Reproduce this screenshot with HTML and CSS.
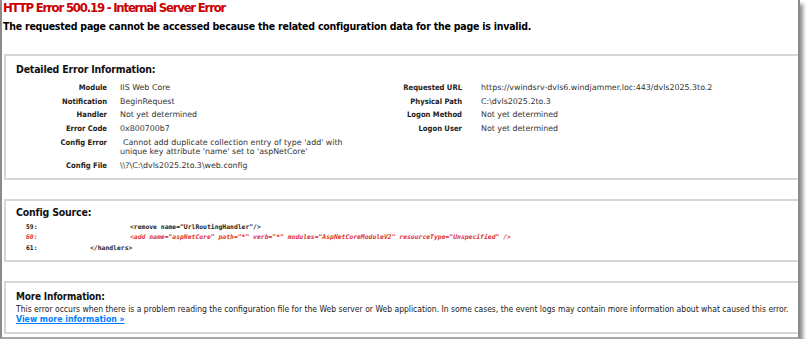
FILE: index.html
```html
<!DOCTYPE html>
<html lang="en">
<head>
  <meta charset="UTF-8" />
  <title>IIS 10.0 Detailed Error - 500.19 - Internal Server Error</title>
  <link rel="stylesheet" href="styles.css">
</head>
<body>
  <div class="window">
    <div class="header">
      <h2>HTTP Error 500.19 - Internal Server Error</h2>
      <h3>The requested page cannot be accessed because the related configuration data for the page is invalid.</h3>
    </div>

    <div class="panel details">
      <h4>Detailed Error Information:</h4>
      <div class="columns">
        <div class="grid grid-left">
          <div class="label">Module</div><div class="value">IIS Web Core</div>
          <div class="label">Notification</div><div class="value">BeginRequest</div>
          <div class="label">Handler</div><div class="value">Not yet determined</div>
          <div class="label">Error Code</div><div class="value">0x800700b7</div>
          <div class="label">Config Error</div><div class="value indent">Cannot add duplicate collection entry of type 'add' with<br>unique key attribute 'name' set to 'aspNetCore'</div>
          <div class="label">Config File</div><div class="value">\\?\C:\dvls2025.2to.3\web.config</div>
        </div>
        <div class="grid grid-right">
          <div class="label">Requested URL</div><div class="value">https://vwindsrv-dvls6.windjammer.loc:443/dvls2025.3to.2</div>
          <div class="label">Physical Path</div><div class="value">C:\dvls2025.2to.3</div>
          <div class="label">Logon Method</div><div class="value">Not yet determined</div>
          <div class="label">Logon User</div><div class="value">Not yet determined</div>
        </div>
      </div>
    </div>

    <div class="panel source">
      <h4>Config Source:</h4>
      <div class="code">
        <div class="line"><span class="num">59:</span><span class="src indent-2">&lt;remove name="UrlRoutingHandler"/&gt;</span></div>
        <div class="line highlight"><span class="num">60:</span><span class="src indent-2">&lt;add name="aspNetCore" path="*" verb="*" modules="AspNetCoreModuleV2" resourceType="Unspecified" /&gt;</span></div>
        <div class="line"><span class="num">61:</span><span class="src indent-1">&lt;/handlers&gt;</span></div>
      </div>
    </div>

    <div class="panel more">
      <h4>More Information:</h4>
      <p>This error occurs when there is a problem reading the configuration file for the Web server or Web application. In some cases, the event logs may contain more information about what caused this error.</p>
      <a href="#">View more information &raquo;</a>
    </div>
  </div>
</body>
</html>
```

FILE: styles.css
```css
body {
  margin: 0;
  background-color: #fff;
  font-family: "DejaVu Sans Condensed", "DejaVu Sans", Verdana, sans-serif;
  color: #000;
}
.window {
  width: 800px;
  height: 339px;
  border-left: 2px solid #8c8c8c;
  border-right: 2px solid #8c8c8c;
  border-bottom: 2px solid #a8a8a8;
  box-shadow: 3px 4px 4px rgba(0, 0, 0, 0.45);
  background-color: #fff;
  box-sizing: border-box;
  overflow: hidden;
}
.header {
  padding: 0 0 0 1px;
}
h2 {
  margin: 0;
  font-size: 13px;
  letter-spacing: -1.2px;
  color: #cc0000;
  line-height: 16px;
}
h3 {
  margin: 4px 0 0 0;
  font-size: 10.5px;
  letter-spacing: -0.22px;
  line-height: 13px;
}
.panel {
  margin-left: 2px;
  border: 2px solid #d6d6d6;
  border-right: none;
  padding: 0 0 0 10px;
}
h4 {
  margin: 0;
  font-size: 10.5px;
  letter-spacing: -0.2px;
  color: #111;
  line-height: 13px;
}
.details {
  margin-top: 21px;
  height: 126px;
  padding-top: 7px;
  box-sizing: border-box;
}
.columns {
  display: flex;
  align-items: flex-start;
  margin-top: 7px;
  margin-left: -10px;
}
.grid {
  display: grid;
  align-content: start;
  column-gap: 13px;
  row-gap: 4.2px;
  font-size: 7.6px;
  line-height: 9.5px;
}
.grid-left {
  grid-template-columns: 101px 1fr;
  width: 344px;
}
.grid-right {
  grid-template-columns: 112px 1fr;
  column-gap: 19px;
}
.label {
  font-weight: bold;
  text-align: right;
  color: #222;
}
.value {
  font-family: "DejaVu Sans", Verdana, sans-serif;
  font-size: 7.9px;
  color: #333;
}
.indent {
  text-indent: 3px;
}
.source {
  margin-top: 19px;
  height: 63px;
  padding-top: 5px;
  box-sizing: border-box;
}
.code {
  margin-top: 3px;
  font-family: "DejaVu Sans Mono", monospace;
  font-size: 6.4px;
  font-weight: bold;
  line-height: 10.4px;
  color: #222;
}
.line {
  display: flex;
  white-space: pre;
}
.num {
  width: 15px;
  padding-left: 10px;
}
.indent-1 {
  margin-left: 49px;
}
.indent-2 {
  margin-left: 89px;
}
.highlight {
  color: #e03030;
  font-style: italic;
}
.more {
  margin-top: 19px;
  height: 53px;
  padding-top: 7px;
  box-sizing: border-box;
}
.more h4 {
  font-size: 10px;
}
.more p {
  margin: 1px 0 0 0;
  font-size: 8.5px;
  line-height: 10px;
  color: #222;
}
.more a {
  display: block;
  font-size: 8.7px;
  font-weight: bold;
  color: #007eff;
  line-height: 10px;
}
```
